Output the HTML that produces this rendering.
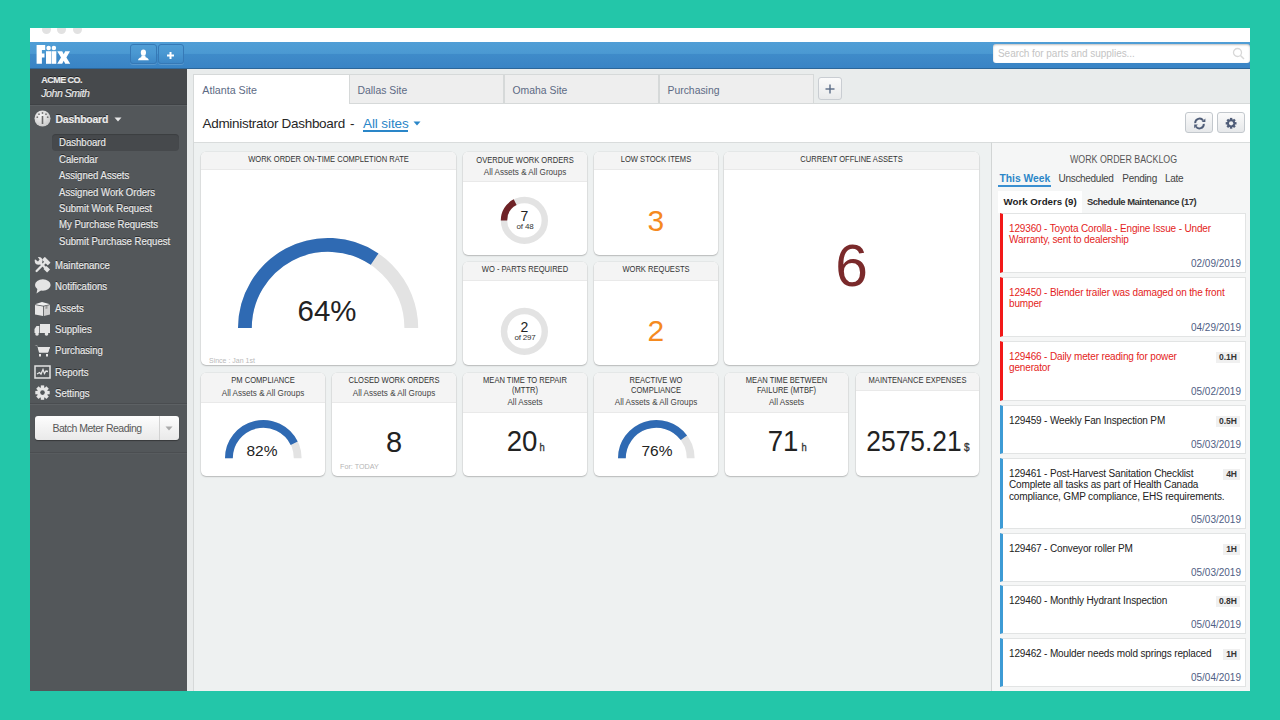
<!DOCTYPE html>
<html><head><meta charset="utf-8">
<style>
*{box-sizing:border-box;margin:0;padding:0}
html,body{width:1280px;height:720px;overflow:hidden}
body{background:#23c6a9;font-family:"Liberation Sans",sans-serif;position:relative}
.a{position:absolute}
.nw{white-space:nowrap}
.sx{transform:scaleX(.87);transform-origin:0 50%}
.st{color:#ececec;text-shadow:0 -1px 0 rgba(0,0,0,.55);font-size:11px;white-space:nowrap;-webkit-text-stroke:0.2px #e6e6e6}
.tab{top:74px;height:30px;background:#eeeeee;border:1px solid #d6d9d9}
.tt{position:absolute;top:84.5px;font-size:10.4px;line-height:11px;color:#5d6a84;white-space:nowrap}
.card{background:#fff;border-radius:5px;box-shadow:0 0 0 0.6px rgba(0,0,0,.07),0 1px 1.5px rgba(0,0,0,.2);overflow:hidden}
.ch{position:absolute;left:0;top:0;width:100%;background:#f4f4f4;border-bottom:1px solid #e9e9e9;text-align:center;color:#333;font-size:9px;line-height:10.5px;padding-top:3px;white-space:nowrap}
.hl{position:absolute;left:0;width:100%;text-align:center;font-size:9px;line-height:9px;color:#333;white-space:nowrap}
.wo{position:absolute;left:1000px;width:246px;background:#fff;border:1px solid #e2e4e4;border-left:3px solid #3d9bd5;font-size:10px;color:#222}
.wo.r{border-left-color:#f21818;color:#e41d22}
.wo .t{position:absolute;left:6px;top:9px;width:225px;line-height:11.35px;letter-spacing:-0.15px;white-space:nowrap}
.wo .d{position:absolute;right:4px;bottom:2.7px;line-height:11.5px;color:#4f5e84;font-size:10px}
.wo .h{position:absolute;right:5px;top:9.5px;height:11px;line-height:11px;background:#f0f0f0;color:#333;font-size:8.5px;font-weight:bold;padding:0 3px}
</style></head><body>
<!-- window frame -->
<div class="a" style="left:30px;top:28px;width:1220px;height:663px;background:#e9ecec"></div>
<div class="a" style="left:30px;top:28px;width:1220px;height:14px;background:#fff;overflow:hidden">
  <div class="a" style="left:12px;top:-3px;width:9px;height:9px;border-radius:50%;background:#e2e2e2"></div>
  <div class="a" style="left:27px;top:-3px;width:9px;height:9px;border-radius:50%;background:#e2e2e2"></div>
  <div class="a" style="left:43px;top:-3px;width:9px;height:9px;border-radius:50%;background:#e2e2e2"></div>
</div>
<!-- blue header -->
<div class="a" style="left:30px;top:42px;width:1220px;height:27px;background:linear-gradient(#509ed6 0%,#4b99d2 44%,#3f8bc9 47%,#3984c5 100%);border-bottom:1px solid #2c6699"></div>


<svg class="a" style="left:36px;top:44px" width="36" height="21" viewBox="0 0 36 21" fill="#fff">
  <path d="M0.6 1 H9.2 V6 H5.9 V9.4 H8.5 V13.5 H5.9 V19.8 H0.6Z"/>
  <circle cx="12.6" cy="4.1" r="2.25"/><circle cx="17.9" cy="4.1" r="2.25"/>
  <rect x="10" y="7.2" width="5" height="12.6"/><rect x="15.5" y="7.2" width="4.8" height="12.6"/>
  <path d="M21.3 7.2 H26.2 L27.7 10.2 L29.2 7.2 H34 L30.4 13.4 L34.2 19.8 H29.2 L27.7 16.7 L26.2 19.8 H21.2 L25 13.4Z"/>
</svg>
<div class="a" style="left:130px;top:44px;width:27px;height:20px;border-radius:3px;border:1px solid #3679b6;background:linear-gradient(#4f9dd5,#4a98d2 45%,#3d88c7);box-shadow:0 1px 0 rgba(255,255,255,.15)"></div>
<div class="a" style="left:158px;top:44px;width:26px;height:20px;border-radius:3px;border:1px solid #3679b6;background:linear-gradient(#4f9dd5,#4a98d2 45%,#3d88c7);box-shadow:0 1px 0 rgba(255,255,255,.15)"></div>
<svg class="a" style="left:137px;top:49px" width="13" height="13" viewBox="0 0 13 13" fill="#fff">
  <ellipse cx="6.4" cy="3.6" rx="2.6" ry="3.2"/>
  <path d="M4.5 6.5 H8.3 L8.6 8.2 C10.8 8.8 11.5 9.8 11.8 11.2 H1 C1.3 9.8 2 8.8 4.2 8.2Z"/>
</svg>
<svg class="a" style="left:167.25px;top:51.5px" width="7" height="7" viewBox="0 0 7 7" fill="#fff"><rect x="2.5" y="0" width="2" height="7"/><rect x="0" y="2.5" width="7" height="2"/></svg>
<div class="a" style="left:993px;top:44px;width:257px;height:19px;border-radius:3px;background:#fff;box-shadow:inset 0 1px 2px rgba(0,0,0,.25)"></div>
<div class="a nw" style="left:998px;top:48px;font-size:10px;letter-spacing:-0.05px;color:#c4c4c4">Search for parts and supplies...</div>
<svg class="a" style="left:1232px;top:47px" width="13" height="13" viewBox="0 0 13 13"><circle cx="5.5" cy="5.5" r="4" fill="none" stroke="#d8d8d8" stroke-width="1.3"/><path d="M8.5 8.5 L12 12" stroke="#d8d8d8" stroke-width="1.5"/></svg>

<!-- sidebar -->
<div class="a" style="left:30px;top:69px;width:157px;height:622px;background:#53575a"></div>
<div class="a" style="left:30px;top:69px;width:157px;height:36px;background:#46494c;border-bottom:1px solid #3f4245"></div>
<div class="a st" style="left:41.3px;top:75px;font-size:9px;font-weight:bold;letter-spacing:-0.55px">ACME CO.</div>
<div class="a st" style="left:41.3px;top:86.7px;font-size:10.5px;font-style:italic;letter-spacing:-0.45px">John Smith</div>


<div class="a" style="left:30px;top:105px;width:157px;height:1px;background:#5c6063"></div>
<!-- dashboard icon -->
<svg class="a" style="left:34px;top:110px" width="17" height="17" viewBox="0 0 17 17">
  <defs><radialGradient id="gg" cx="0.4" cy="0.35" r="0.7"><stop offset="0" stop-color="#f4f4f4"/><stop offset="1" stop-color="#c9c9c9"/></radialGradient></defs>
  <circle cx="8.5" cy="8.5" r="8" fill="url(#gg)"/>
  <rect x="7.7" y="6" width="1.6" height="8" fill="#6a6a6a"/>
  <circle cx="8.5" cy="3" r="0.9" fill="#777"/><circle cx="5" cy="4.2" r="0.9" fill="#777"/><circle cx="12" cy="4.2" r="0.9" fill="#777"/>
  <circle cx="3.3" cy="7.2" r="0.9" fill="#777"/><circle cx="13.7" cy="7.2" r="0.9" fill="#777"/>
</svg>
<div class="a st" style="left:55.5px;top:112.7px;font-size:10.5px;font-weight:bold;letter-spacing:-0.25px">Dashboard</div>
<svg class="a" style="left:114px;top:117px" width="8" height="5" viewBox="0 0 8 5"><path d="M0.5 0.5h7L4 4.5z" fill="#e8e8e8"/></svg>
<div class="a" style="left:52px;top:134px;width:127px;height:17px;border-radius:4px;background:#46494c;box-shadow:inset 0 1px 1px rgba(0,0,0,.15)"></div>
<div class="a st sx" style="left:59px;top:136px;font-size:11px;">Dashboard</div>
<div class="a st sx" style="left:59px;top:153px;font-size:11px;">Calendar</div>
<div class="a st sx" style="left:59px;top:169px;font-size:11px;">Assigned Assets</div>
<div class="a st sx" style="left:59px;top:186px;font-size:11px;">Assigned Work Orders</div>
<div class="a st sx" style="left:59px;top:202px;font-size:11px;">Submit Work Request</div>
<div class="a st sx" style="left:59px;top:218px;font-size:11px;">My Purchase Requests</div>
<div class="a st sx" style="left:59px;top:235px;font-size:11px;">Submit Purchase Request</div>

<div class="a st sx" style="left:55px;top:259px;font-size:11px;">Maintenance</div>
<div class="a st sx" style="left:55px;top:280px;font-size:11px;">Notifications</div>
<div class="a st sx" style="left:55px;top:302px;font-size:11px;">Assets</div>
<div class="a st sx" style="left:55px;top:323px;font-size:11px;">Supplies</div>
<div class="a st sx" style="left:55px;top:344px;font-size:11px;">Purchasing</div>
<div class="a st sx" style="left:55px;top:366px;font-size:11px;">Reports</div>
<div class="a st sx" style="left:55px;top:387px;font-size:11px;">Settings</div>

<!-- icons -->
<svg class="a" style="left:34px;top:256px" width="17" height="17" viewBox="0 0 17 17">
  <g stroke="#e4e4e4" fill="none">
    <path d="M5 5.5 L13 13.5" stroke-width="2.4"/>
    <path d="M11 11.5 L14.6 15.1" stroke-width="4.2"/>
    <path d="M2.6 15 L11.5 6" stroke-width="2.3" stroke-linecap="round"/>
  </g>
  <circle cx="4.6" cy="4.8" r="3.9" fill="#e4e4e4"/>
  <path d="M0 2.5 L3 0 L5.6 3.6 L4 5.4Z" fill="#53575a"/>
  <rect x="8.2" y="3.2" width="8.2" height="4" rx="0.6" fill="#e4e4e4" transform="rotate(45 12.3 5.2)"/>
</svg>
<svg class="a" style="left:34px;top:278px" width="17" height="17" viewBox="0 0 17 17">
  <ellipse cx="8.8" cy="7" rx="7.8" ry="5.8" fill="#e4e4e4"/>
  <path d="M3.5 10.5 L2.5 15.5 L7.5 12" fill="#e4e4e4"/>
</svg>
<svg class="a" style="left:34px;top:300px" width="17" height="17" viewBox="0 0 17 17">
  <path d="M1 5 L9 6.5 L9 16 L1 14.5Z" fill="#e6e6e6"/>
  <path d="M9.8 6.5 L16 5 L16 14.5 L9.8 16Z" fill="#cfcfcf"/>
  <path d="M1 4.2 L8 2 L16 4.2 L9.4 5.8Z" fill="#f0f0f0"/>
  <path d="M11.5 6 L13.5 5.5 L13.5 8.5 L11.5 9Z" fill="#9a9a9a"/>
</svg>
<svg class="a" style="left:34px;top:322px" width="17" height="15" viewBox="0 0 17 15">
  <path d="M6 2 H16 V11 H6Z" fill="#e6e6e6"/>
  <path d="M0.5 7 L2.5 4 H5.3 V11 H0.5Z" fill="#e6e6e6"/>
  <circle cx="3" cy="12" r="1.8" fill="#e6e6e6"/><circle cx="12.5" cy="12" r="1.8" fill="#e6e6e6"/>
</svg>
<svg class="a" style="left:34px;top:343px" width="17" height="15" viewBox="0 0 17 15">
  <path d="M0.5 2 H3 L5 9.5 H14 L16 4 H3.8 L3.4 2.6Z" fill="#e6e6e6"/>
  <path d="M4 4 H16 L14 9.5 H5.5Z" fill="#e6e6e6"/>
  <rect x="5" y="11" width="2" height="2.5" fill="#e6e6e6"/><rect x="12" y="11" width="2" height="2.5" fill="#e6e6e6"/>
</svg>
<svg class="a" style="left:34px;top:365px" width="17" height="14" viewBox="0 0 17 14">
  <rect x="1" y="1" width="15" height="12" fill="none" stroke="#e4e4e4" stroke-width="1.5"/>
  <path d="M3 9 L5.5 7.5 L7 9 L9 4.5 L10.5 8.5 L12 6 L14 6.5" fill="none" stroke="#e4e4e4" stroke-width="1.3"/>
</svg>
<svg class="a" style="left:34px;top:385px" width="17" height="16" viewBox="0 0 17 16">
  <g fill="#e6e6e6" transform="translate(8.5,7.6)">
    <circle r="5.3"/>
    <rect x="-1.7" y="-7.2" width="3.4" height="14.4"/>
    <rect x="-1.7" y="-7.2" width="3.4" height="14.4" transform="rotate(45)"/>
    <rect x="-1.7" y="-7.2" width="3.4" height="14.4" transform="rotate(90)"/>
    <rect x="-1.7" y="-7.2" width="3.4" height="14.4" transform="rotate(135)"/>
  </g>
  <circle cx="8.5" cy="7.6" r="2.3" fill="#53575a"/>
</svg>

<div class="a" style="left:30px;top:403px;width:157px;height:1px;background:#4a4d50"></div>
<div class="a" style="left:30px;top:404px;width:157px;height:1px;background:#5d6164"></div>
<div class="a" style="left:35px;top:416px;width:144px;height:24px;border-radius:3px;background:linear-gradient(#fdfdfd,#e9e9e9);box-shadow:0 1px 1px rgba(0,0,0,.35)"></div>
<div class="a" style="left:159px;top:416px;width:1px;height:24px;background:#d2d2d2"></div>
<div class="a" style="left:30px;top:452px;width:157px;height:1px;background:#4b4e51"></div>
<div class="a" style="left:30px;top:453px;width:157px;height:1px;background:#585c5f"></div>
<div class="a nw" style="left:35px;top:422px;width:124px;text-align:center;font-size:10.5px;letter-spacing:-0.5px;color:#585858">Batch Meter Reading</div>
<svg class="a" style="left:165px;top:426px" width="8" height="5" viewBox="0 0 8 5"><path d="M0.5 0.5h7L4 4.5z" fill="#aaa"/></svg>

<!-- main panel -->
<div class="a" style="left:193px;top:103px;width:1057px;height:588px;background:#fff;border-left:1px solid #d6d9d9;border-top:1px solid #d6d9d9"></div>
<div class="a" style="left:193px;top:74px;width:156px;height:30px;background:#fff;border-left:1px solid #d6d9d9;border-top:1px solid #d6d9d9"></div>
<div class="a tab" style="left:349px;width:155px"></div><div class="tt" style="left:357.5px">Dallas Site</div>
<div class="a tab" style="left:504px;width:155px"></div><div class="tt" style="left:512.5px">Omaha Site</div>
<div class="a tab" style="left:659px;width:155px"></div><div class="tt" style="left:667.5px">Purchasing</div>
<div class="tt" style="left:202.3px;font-size:10.7px">Atlanta Site</div>
<div class="a nw" style="left:202.5px;top:116.6px;font-size:13.5px;line-height:13.5px;letter-spacing:-0.3px;color:#262626">Administrator Dashboard</div><div class="a nw" style="left:350px;top:116.6px;font-size:13.5px;line-height:13.5px;color:#262626">-</div>
<div class="a nw" style="left:363px;top:116.6px;font-size:13.5px;line-height:13.5px;letter-spacing:-0.1px;color:#2a86c8">All sites</div>
<div class="a" style="left:363px;top:130px;width:45px;height:2px;background:#2a86c8"></div>

<div class="a" style="left:194px;top:142px;width:1056px;height:549px;background:#eef1f1;border-top:1px solid #d9dcdc"></div>
<div class="a" style="left:991px;top:142px;width:259px;height:549px;background:#f5f6f6;border-left:1px solid #d2d5d5;border-top:1px solid #d9dcdc"></div>


<div class="a" style="left:818px;top:77px;width:24px;height:23px;border-radius:3px;border:1px solid #c9cdd2;background:linear-gradient(#fbfbfb,#e9eaeb)"></div>
<svg class="a" style="left:825px;top:84px" width="10" height="10" viewBox="0 0 10 10" fill="#5a6b86"><rect x="4.3" y="0.5" width="1.4" height="9"/><rect x="0.5" y="4.3" width="9" height="1.4"/></svg>
<svg class="a" style="left:413px;top:121px" width="8" height="5" viewBox="0 0 8 5"><path d="M0.5 0.5h7L4 4.5z" fill="#2a86c8"/></svg>
<div class="a" style="left:1185px;top:112px;width:28px;height:21px;border-radius:3px;border:1px solid #c3c8cd;background:linear-gradient(#fbfbfb,#e6e8ea)"></div>
<div class="a" style="left:1217px;top:112px;width:28px;height:21px;border-radius:3px;border:1px solid #c3c8cd;background:linear-gradient(#fbfbfb,#e6e8ea)"></div>
<svg class="a" style="left:1192.6px;top:116.8px" width="13" height="13" viewBox="0 0 13 13">
  <g fill="none" stroke="#4f5d78" stroke-width="1.9"><path d="M2.2 6.1 A4.3 4.3 0 0 1 10.1 3.6"/><path d="M10.8 6.9 A4.3 4.3 0 0 1 2.9 9.4"/></g>
  <path d="M12.4 1.4 V5.1 H8.7Z" fill="#4f5d78"/><path d="M1.2 11.2 V7.5 H4.9Z" fill="#4f5d78"/>
</svg>
<svg class="a" style="left:1224px;top:116px" width="14" height="14" viewBox="0 0 14 14">
  <g fill="#4f5d78" transform="translate(7.1,7.3)">
    <circle r="4"/>
    <rect x="-1.2" y="-5.4" width="2.4" height="10.8"/>
    <rect x="-1.2" y="-5.4" width="2.4" height="10.8" transform="rotate(45)"/>
    <rect x="-1.2" y="-5.4" width="2.4" height="10.8" transform="rotate(90)"/>
    <rect x="-1.2" y="-5.4" width="2.4" height="10.8" transform="rotate(135)"/>
  </g>
  <circle cx="7.1" cy="7.3" r="2.1" fill="#eef0f1"/>
</svg>

<!-- cards -->
<div class="a card" style="left:201px;top:152px;width:255px;height:213px"><div class="ch" style="height:18px"></div><div class="hl" style="top:3.4px;color:#333;transform:scaleX(.84)">WORK ORDER ON-TIME COMPLETION RATE</div></div>
<div class="a card" style="left:463px;top:152px;width:124px;height:103px"><div class="ch" style="height:30px"></div><div class="hl" style="top:3.6px;color:#333;transform:scaleX(.84)">OVERDUE WORK ORDERS</div><div class="hl" style="top:16.0px;color:#444;transform:scaleX(.9)">All Assets &amp; All Groups</div></div>
<div class="a card" style="left:594px;top:152px;width:124px;height:103px"><div class="ch" style="height:18px"></div><div class="hl" style="top:3.4px;color:#333;transform:scaleX(.84)">LOW STOCK ITEMS</div></div>
<div class="a card" style="left:724px;top:152px;width:255px;height:213px"><div class="ch" style="height:18px"></div><div class="hl" style="top:3.4px;color:#333;transform:scaleX(.84)">CURRENT OFFLINE ASSETS</div></div>
<div class="a card" style="left:463px;top:262px;width:124px;height:103px"><div class="ch" style="height:19px"></div><div class="hl" style="top:3.4px;color:#333;transform:scaleX(.84)">WO - PARTS REQUIRED</div></div>
<div class="a card" style="left:594px;top:262px;width:124px;height:103px"><div class="ch" style="height:19px"></div><div class="hl" style="top:3.4px;color:#333;transform:scaleX(.84)">WORK REQUESTS</div></div>
<div class="a card" style="left:201px;top:373px;width:124px;height:103px"><div class="ch" style="height:30px"></div><div class="hl" style="top:3.2px;color:#333;transform:scaleX(.84)">PM COMPLIANCE</div><div class="hl" style="top:15.6px;color:#444;transform:scaleX(.9)">All Assets &amp; All Groups</div></div>
<div class="a card" style="left:332px;top:373px;width:124px;height:103px"><div class="ch" style="height:30px"></div><div class="hl" style="top:3.2px;color:#333;transform:scaleX(.84)">CLOSED WORK ORDERS</div><div class="hl" style="top:15.6px;color:#444;transform:scaleX(.9)">All Assets &amp; All Groups</div></div>
<div class="a card" style="left:463px;top:373px;width:124px;height:103px"><div class="ch" style="height:40px"></div><div class="hl" style="top:3.2px;color:#333;transform:scaleX(.84)">MEAN TIME TO REPAIR</div><div class="hl" style="top:12.7px;color:#333;transform:scaleX(.84)">(MTTR)</div><div class="hl" style="top:25.0px;color:#444;transform:scaleX(.9)">All Assets</div></div>
<div class="a card" style="left:594px;top:373px;width:124px;height:103px"><div class="ch" style="height:40px"></div><div class="hl" style="top:3.2px;color:#333;transform:scaleX(.84)">REACTIVE WO</div><div class="hl" style="top:12.7px;color:#333;transform:scaleX(.84)">COMPLIANCE</div><div class="hl" style="top:25.0px;color:#444;transform:scaleX(.9)">All Assets &amp; All Groups</div></div>
<div class="a card" style="left:725px;top:373px;width:123px;height:103px"><div class="ch" style="height:40px"></div><div class="hl" style="top:3.2px;color:#333;transform:scaleX(.84)">MEAN TIME BETWEEN</div><div class="hl" style="top:12.7px;color:#333;transform:scaleX(.84)">FAILURE (MTBF)</div><div class="hl" style="top:25.0px;color:#444;transform:scaleX(.9)">All Assets</div></div>
<div class="a card" style="left:856px;top:373px;width:123px;height:103px"><div class="ch" style="height:18px"></div><div class="hl" style="top:3.2px;color:#333;transform:scaleX(.84)">MAINTENANCE EXPENSES</div></div>
<svg class="a" style="left:236.1px;top:235.5px" width="184.2" height="94.1"><path d="M8.90 92.10 A83.19999999999999 83.19999999999999 0 0 1 175.30 92.10" fill="none" stroke="#e3e3e3" stroke-width="13.799999999999997"/><path d="M8.90 92.10 A83.19999999999999 83.19999999999999 0 0 1 138.62 23.12" fill="none" stroke="#2f6ab3" stroke-width="13.799999999999997"/></svg>
<div class="a nw" style="left:227px;width:200px;top:296.0px;text-align:center;font-size:30px;line-height:30px;color:#222;transform:scaleX(0.98);">64%</div>
<div class="a nw" style="left:209px;top:357px;font-size:7px;line-height:7px;color:#b9b9b9">Since : Jan 1st</div>
<svg class="a" style="left:498.4px;top:194.0px" width="52.8" height="52.8"><circle cx="26.4" cy="26.4" r="20.4" fill="none" stroke="#e3e3e3" stroke-width="6.4"/><path d="M6.00 26.40 A20.4 20.4 0 0 1 17.14 8.22" fill="none" stroke="#6e2226" stroke-width="6.4"/></svg>
<div class="a nw" style="left:424.5px;width:200px;top:209.2px;text-align:center;font-size:14px;line-height:14px;color:#222;transform:scaleX(1.0);">7</div>
<div class="a nw" style="left:425px;width:200px;top:222.8px;text-align:center;font-size:8px;line-height:8px;color:#333;letter-spacing:-0.2px">of 48</div>
<svg class="a" style="left:498.4px;top:304.6px" width="52.8" height="52.8"><circle cx="26.4" cy="26.4" r="20.4" fill="none" stroke="#e3e3e3" stroke-width="6.4"/></svg>
<div class="a nw" style="left:424.5px;width:200px;top:320.1px;text-align:center;font-size:14px;line-height:14px;color:#222;transform:scaleX(1.0);">2</div>
<div class="a nw" style="left:425px;width:200px;top:333.6px;text-align:center;font-size:8px;line-height:8px;color:#333;letter-spacing:-0.2px">of 297</div>
<div class="a nw" style="left:555.8px;width:200px;top:205.6px;text-align:center;font-size:30px;line-height:30px;color:#f58a1f;transform:scaleX(1.0);">3</div>
<div class="a nw" style="left:555.8px;width:200px;top:315.8px;text-align:center;font-size:30px;line-height:30px;color:#f58a1f;transform:scaleX(1.0);">2</div>
<div class="a nw" style="left:751.7px;width:200px;top:236.9px;text-align:center;font-size:58.7px;line-height:58.7px;color:#7a2a2b;transform:scaleX(1.0);">6</div>
<svg class="a" style="left:222.7px;top:417.8px" width="80.6" height="42.3"><path d="M5.90 40.30 A34.4 34.4 0 0 1 74.70 40.30" fill="none" stroke="#e3e3e3" stroke-width="7.799999999999997"/><path d="M5.90 40.30 A34.4 34.4 0 0 1 71.22 25.22" fill="none" stroke="#2f6ab3" stroke-width="7.799999999999997"/></svg>
<div class="a nw" style="left:162px;width:200px;top:442.6px;text-align:center;font-size:15.5px;line-height:15.5px;color:#222;transform:scaleX(1.0);">82%</div>
<div class="a nw" style="left:294px;width:200px;top:427.7px;text-align:center;font-size:29px;line-height:29px;color:#222;transform:scaleX(1.0);">8</div>
<div class="a nw" style="left:340px;top:463px;font-size:7.2px;line-height:7.2px;color:#b5b5b5">For: TODAY</div>
<div class="a nw" style="left:421.5px;width:200px;top:426.0px;text-align:center;font-size:30px;line-height:30px;color:#222;transform:scaleX(0.92);">20</div>
<div class="a nw" style="left:538.5px;top:442.2px;font-size:11px;line-height:11px;color:#333;-webkit-text-stroke:0.35px #333;transform:scaleX(.85)">h</div>
<svg class="a" style="left:615.8px;top:417.8px" width="80.6" height="42.3"><path d="M5.90 40.30 A34.4 34.4 0 0 1 74.70 40.30" fill="none" stroke="#e3e3e3" stroke-width="7.799999999999997"/><path d="M5.90 40.30 A34.4 34.4 0 0 1 67.92 19.79" fill="none" stroke="#2f6ab3" stroke-width="7.799999999999997"/></svg>
<div class="a nw" style="left:557px;width:200px;top:442.6px;text-align:center;font-size:15.5px;line-height:15.5px;color:#222;transform:scaleX(1.0);">76%</div>
<div class="a nw" style="left:682.8px;width:200px;top:426.0px;text-align:center;font-size:30px;line-height:30px;color:#222;transform:scaleX(0.92);">71</div>
<div class="a nw" style="left:800.5px;top:442.2px;font-size:11px;line-height:11px;color:#333;-webkit-text-stroke:0.35px #333;transform:scaleX(.85)">h</div>
<div class="a nw" style="left:814px;width:200px;top:426.9px;text-align:center;font-size:29px;line-height:29px;color:#222;transform:scaleX(0.91);">2575.21</div>
<div class="a nw" style="left:964px;top:442px;font-size:10px;line-height:11px;color:#333;-webkit-text-stroke:0.3px #333">$</div>
<!-- work order backlog -->
<div class="a nw" style="left:991px;top:154.5px;width:265px;text-align:center;font-size:10px;line-height:10px;color:#555;transform:scaleX(.885)">WORK ORDER BACKLOG</div>


<div class="a nw" style="left:999.5px;top:172.8px;font-size:10.3px;line-height:11px;font-weight:bold;color:#2a86c8">This Week</div>
<div class="a" style="left:998px;top:185px;width:53px;height:2px;background:#3a8fd0"></div>
<div class="a nw" style="left:1058.5px;top:173.8px;font-size:10px;line-height:10px;letter-spacing:-0.3px;color:#444">Unscheduled</div>
<div class="a nw" style="left:1122.3px;top:173.8px;font-size:10px;line-height:10px;letter-spacing:-0.3px;color:#444">Pending</div>
<div class="a nw" style="left:1165px;top:173.8px;font-size:10px;line-height:10px;letter-spacing:-0.3px;color:#444">Late</div>
<div class="a" style="left:998px;top:191px;width:84px;height:22px;background:#fff"></div>
<div class="a nw" style="left:1003.6px;top:196.5px;font-size:9.7px;line-height:10px;font-weight:bold;color:#222">Work Orders (9)</div>
<div class="a nw" style="left:1087px;top:196.5px;font-size:9.4px;line-height:10px;font-weight:bold;color:#333;letter-spacing:-0.45px">Schedule Maintenance (17)</div>
<div class="wo r" style="top:213px;height:60px"><div class="t">129360 - Toyota Corolla - Engine Issue - Under<br>Warranty, sent to dealership</div><div class="d">02/09/2019</div></div>
<div class="wo r" style="top:277px;height:60px"><div class="t">129450 - Blender trailer was damaged on the front<br>bumper</div><div class="d">04/29/2019</div></div>
<div class="wo r" style="top:341px;height:60px"><div class="t">129466 - Daily meter reading for power<br>generator</div><div class="h">0.1H</div><div class="d">05/02/2019</div></div>
<div class="wo" style="top:405px;height:49px"><div class="t">129459 - Weekly Fan Inspection PM</div><div class="h">0.5H</div><div class="d">05/03/2019</div></div>
<div class="wo" style="top:458px;height:71px"><div class="t">129461 - Post-Harvest Sanitation Checklist<br>Complete all tasks as part of Health Canada<br>compliance, GMP compliance, EHS requirements.</div><div class="h">4H</div><div class="d">05/03/2019</div></div>
<div class="wo" style="top:533px;height:49px"><div class="t">129467 - Conveyor roller PM</div><div class="h">1H</div><div class="d">05/03/2019</div></div>
<div class="wo" style="top:585px;height:49px"><div class="t">129460 - Monthly Hydrant Inspection</div><div class="h">0.8H</div><div class="d">05/04/2019</div></div>
<div class="wo" style="top:638px;height:49px"><div class="t">129462 - Moulder needs mold springs replaced</div><div class="h">1H</div><div class="d">05/04/2019</div></div>

</body></html>
